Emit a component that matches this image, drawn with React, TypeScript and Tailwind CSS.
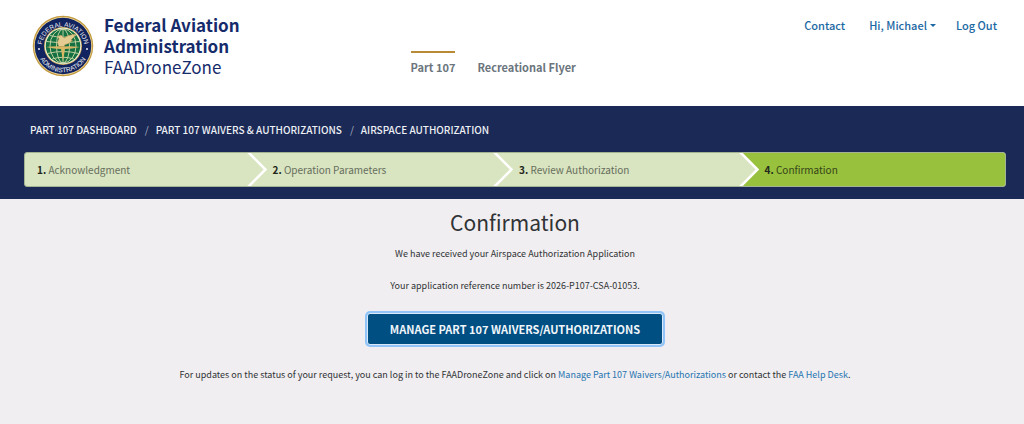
import { clsx } from "clsx";

const breadcrumbs = [
  "PART 107 DASHBOARD",
  "PART 107 WAIVERS & AUTHORIZATIONS",
  "AIRSPACE AUTHORIZATION",
];

const steps = [
  "Acknowledgment",
  "Operation Parameters",
  "Review Authorization",
  "Confirmation",
];

function Seal() {
  return (
    <svg viewBox="0 0 124 124" className="mt-px size-[62px] shrink-0" role="img" aria-label="FAA seal">
      <defs>
        <path id="seal-top" d="M 19 66 A 43 43 0 1 1 105 66" />
        <path id="seal-bottom" d="M 9.5 62 A 52.5 52.5 0 0 0 114.5 62" />
      </defs>
      <circle cx="62" cy="62" r="60.5" fill="#c49a3e" />
      <circle cx="62" cy="62" r="58" fill="#ecd9a0" />
      <circle cx="62" cy="62" r="56.5" fill="#12245f" />
      <g fill="#eef0f4" fontFamily="Liberation Sans, sans-serif" fontSize="13">
        <text textAnchor="middle">
          <textPath href="#seal-top" startOffset="50%">FEDERAL AVIATION</textPath>
        </text>
        <text textAnchor="middle">
          <textPath href="#seal-bottom" startOffset="50%">ADMINISTRATION</textPath>
        </text>
      </g>
      <circle cx="14" cy="68" r="2" fill="#e6e8ee" />
      <circle cx="110" cy="68" r="2" fill="#e6e8ee" />
      <circle cx="62" cy="62" r="38" fill="#c9a75a" />
      <circle cx="62" cy="62" r="36.5" fill="#f4f1dc" />
      <circle cx="62" cy="62" r="34.5" fill="#157042" />

      {/* Globe grid */}
      <g fill="none" stroke="#cfd9a8" strokeWidth="1.8">
        <ellipse cx="62" cy="62" rx="13" ry="34" />
        <ellipse cx="62" cy="62" rx="26" ry="34" />
        <path d="M62 28v68M36 41q26 7 52 0M29 53q33 6 66 0M31 77q31-8 62 0M40 88q22-7 44 0" />
      </g>

      {/* Winged figure and propeller blade */}
      <path
        d="M54 63C50 57 51 52 54 48l-3-5 7-3 6 6 9-5 15-3-5 7-5 5 3 1-8 6-8 3v3z"
        fill="#e3cb92"
        stroke="#b08c42"
        strokeWidth="1"
      />
      <path d="M28 64q17-2 34-1 17-1 34 1-17 4-30 4l-4 25-4-25q-13 0-30-4z" fill="#d8b765" />
    </svg>
  );
}

function Chevron() {
  return (
    <svg viewBox="0 0 20 33" className="mr-1.5 h-[33px] w-5 shrink-0" aria-hidden="true">
      <path d="M0 0H2L18 16.5 2 33H0z" fill="#d9e4c0" />
      <path d="M1 -1L18.5 16.5 1 34" fill="none" stroke="#fff" strokeWidth="2.6" />
    </svg>
  );
}

export default function App() {
  return (
    <div className="min-h-screen bg-[#f0eef1] font-['Noto_Sans_CJK_SC','Noto_Sans',sans-serif] text-[11px] text-[#303335]">
      <header className="grid min-h-[106px] grid-cols-[40%_1fr_auto] bg-white">
        <a href="#" className="flex items-start gap-2.5 pt-[14px] pl-8 text-[#162b6b]">
          <Seal />
          <span className="text-[17px] leading-[21px]">
            <strong className="block font-bold">Federal Aviation</strong>
            <strong className="block font-bold">Administration</strong>
            <span className="block">FAADroneZone</span>
          </span>
        </a>
        <nav className="flex items-start gap-[22px] pt-[51px] pl-px text-[11px] leading-7 font-bold text-[#6b757d]">
          <a href="#" className="border-t-2 border-[#b88a35]">Part 107</a>
          <a href="#" className="border-t-2 border-transparent">Recreational Flyer</a>
        </nav>
        <nav className="flex items-start gap-5 pt-4 pr-[27px] text-[11px] leading-[18px] font-medium text-[#1c68a3]">
          <a href="#" className="mr-1">Contact</a>
          <button type="button" className="flex items-center gap-[3px]">
            Hi, Michael
            <svg viewBox="0 0 6 3" className="h-[3px] w-1.5" aria-hidden="true">
              <path d="M0 0h6L3 3z" fill="currentColor" />
            </svg>
          </button>
          <a href="#">Log Out</a>
        </nav>
      </header>

      <section className="bg-[#1b2956] pt-[15px] pr-[18px] pb-3 pl-6">
        <nav aria-label="Breadcrumb" className="pl-1.5">
          <ol className="flex text-[10px] leading-[18px] font-medium text-[#edf0f5]">
            {breadcrumbs.map((label, i) => (
              <li key={label}>
                {i > 0 && <span className="pr-[7px] pl-2 font-normal text-[#aab1c1]">/</span>}
                <a href="#">{label}</a>
              </li>
            ))}
          </ol>
        </nav>

        <ol className="mt-[13px] grid grid-cols-[222fr_247fr_246fr_267fr] overflow-hidden rounded-[3px] border border-[#a4b394] bg-[#d9e4c0] text-[10px] leading-[33px] text-[#666e5d]">
          {steps.map((label, i) => (
            <li
              key={label}
              className={clsx("flex", i === 0 && "pl-3", i === 3 && "bg-[#98c13e] text-[#354416]")}
            >
              {i > 0 && <Chevron />}
              <span>
                <strong className="font-bold text-[#22271c]">{i + 1}.</strong> {label}
              </span>
            </li>
          ))}
        </ol>
      </section>

      <main className="flex flex-col items-center pt-[7px] pr-[18px] pb-8 pl-6 text-center text-[9px] leading-5">
        <h1 className="text-[21px] leading-8 font-normal">Confirmation</h1>
        <p className="mt-1.5">We have received your Airspace Authorization Application</p>
        <p className="mt-3">Your application reference number is 2026-P107-CSA-01053.</p>
        <button
          type="button"
          className="mt-[17px] rounded-[3px] border border-[#d9e9f8] bg-[#004f83] px-[22px] text-[11px] leading-[30px] font-bold text-[#f1f6fa] ring-2 ring-[#91c5fa]"
        >
          MANAGE PART 107 WAIVERS/AUTHORIZATIONS
        </button>
        <p className="mt-5">
          For updates on the status of your request, you can log in to the FAADroneZone and click on{" "}
          <a href="#" className="text-[#2674b0]">Manage Part 107 Waivers/Authorizations</a> or contact the{" "}
          <a href="#" className="text-[#2674b0]">FAA Help Desk</a>.
        </p>
      </main>
    </div>
  );
}
